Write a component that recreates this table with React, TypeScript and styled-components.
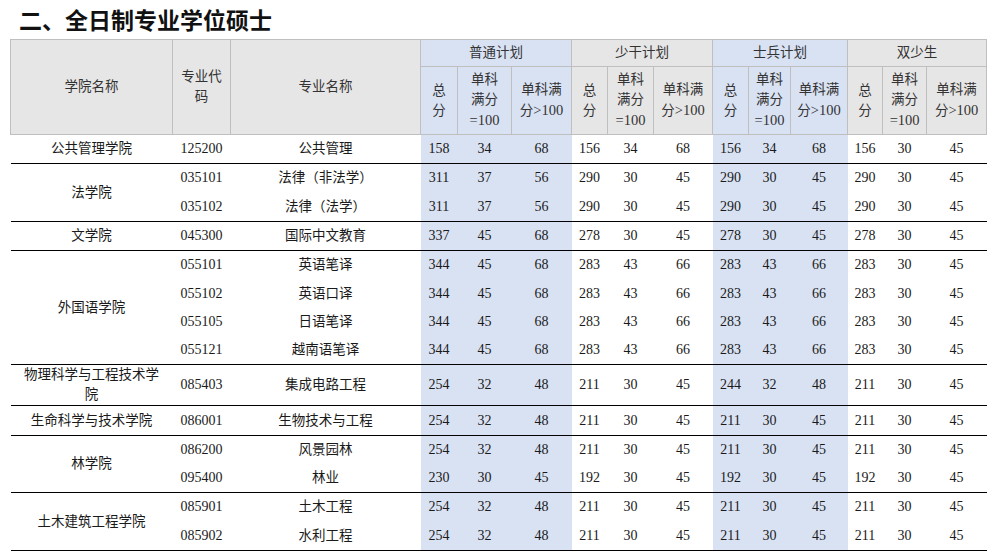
import { createGlobalStyle, styled } from "styled-components";

const GlobalStyle = createGlobalStyle`
    html, body {
        margin: 0;
        padding: 0;
        background: #ffffff;
    }
    body {
        font-family: "Liberation Serif", "Noto Sans CJK SC", serif;
        color: #1a1a1a;
    }
`;

const Page = styled.div`
    padding: 0 6px 0 10px;
`;

const Title = styled.h2`
    margin: 0 0 0 9px;
    height: 39px;
    line-height: 39px;
    font-family: "Noto Sans CJK SC", sans-serif;
    font-size: 23px;
    font-weight: 700;
    color: #111;
`;

const Table = styled.table`
    width: 976px;
    border-collapse: collapse;
    table-layout: fixed;
    font-size: 14px;
`;

const Th = styled.th<{ $blue?: boolean; $h?: number }>`
    background: ${(p) => (p.$blue ? "#d9e2f3" : "#e7e6e6")};
    border: 1px solid #bfbfbf;
    color: #333;
    font-weight: 400;
    font-size: 13.5px;
    line-height: 20px;
    padding: 0 2px;
    height: ${(p) => (p.$h ? `${p.$h}px` : "auto")};
    text-align: center;
    vertical-align: middle;
`;

const HeadNum = styled.span`
    font-size: 14.5px;
`;

const Row = styled.tr<{ $last?: boolean }>`
    border-bottom: ${(p) => (p.$last ? "1px solid #000" : "none")};
`;

const Td = styled.td<{ $blue?: boolean; $tall?: boolean }>`
    background: ${(p) => (p.$blue ? "#d9e2f3" : "transparent")};
    height: ${(p) => (p.$tall ? "40px" : "28.3px")};
    padding: 0;
    line-height: 20px;
    text-align: center;
    vertical-align: middle;
`;

const Text = styled.span`
    font-size: 13.5px;
`;

const widths = [162, 58, 190, 37, 54, 60, 36, 46, 59, 36, 42, 57, 35, 44, 60];

const plans = [
    { name: "普通计划", blue: true },
    { name: "少干计划", blue: false },
    { name: "士兵计划", blue: true },
    { name: "双少生", blue: false },
];

type Major = { code: string; name: string; vals: number[] };
type College = { name: React.ReactNode; tall?: boolean; majors: Major[] };

const colleges: College[] = [
    {
        name: "公共管理学院",
        majors: [{ code: "125200", name: "公共管理", vals: [158, 34, 68, 156, 34, 68, 156, 34, 68, 156, 30, 45] }],
    },
    {
        name: "法学院",
        majors: [
            { code: "035101", name: "法律（非法学）", vals: [311, 37, 56, 290, 30, 45, 290, 30, 45, 290, 30, 45] },
            { code: "035102", name: "法律（法学）", vals: [311, 37, 56, 290, 30, 45, 290, 30, 45, 290, 30, 45] },
        ],
    },
    {
        name: "文学院",
        majors: [{ code: "045300", name: "国际中文教育", vals: [337, 45, 68, 278, 30, 45, 278, 30, 45, 278, 30, 45] }],
    },
    {
        name: "外国语学院",
        majors: [
            { code: "055101", name: "英语笔译", vals: [344, 45, 68, 283, 43, 66, 283, 43, 66, 283, 30, 45] },
            { code: "055102", name: "英语口译", vals: [344, 45, 68, 283, 43, 66, 283, 43, 66, 283, 30, 45] },
            { code: "055105", name: "日语笔译", vals: [344, 45, 68, 283, 43, 66, 283, 43, 66, 283, 30, 45] },
            { code: "055121", name: "越南语笔译", vals: [344, 45, 68, 283, 43, 66, 283, 43, 66, 283, 30, 45] },
        ],
    },
    {
        name: (
            <>
                物理科学与工程技术学
                <br />院
            </>
        ),
        tall: true,
        majors: [{ code: "085403", name: "集成电路工程", vals: [254, 32, 48, 211, 30, 45, 244, 32, 48, 211, 30, 45] }],
    },
    {
        name: "生命科学与技术学院",
        majors: [{ code: "086001", name: "生物技术与工程", vals: [254, 32, 48, 211, 30, 45, 211, 30, 45, 211, 30, 45] }],
    },
    {
        name: "林学院",
        majors: [
            { code: "086200", name: "风景园林", vals: [254, 32, 48, 211, 30, 45, 211, 30, 45, 211, 30, 45] },
            { code: "095400", name: "林业", vals: [230, 30, 45, 192, 30, 45, 192, 30, 45, 192, 30, 45] },
        ],
    },
    {
        name: "土木建筑工程学院",
        majors: [
            { code: "085901", name: "土木工程", vals: [254, 32, 48, 211, 30, 45, 211, 30, 45, 211, 30, 45] },
            { code: "085902", name: "水利工程", vals: [254, 32, 48, 211, 30, 45, 211, 30, 45, 211, 30, 45] },
        ],
    },
];

export default function App() {
    return (
        <Page>
            <GlobalStyle />
            <Title>二、全日制专业学位硕士</Title>
            <Table>
                <colgroup>
                    {widths.map((w, i) => (
                        <col key={i} style={{ width: w }} />
                    ))}
                </colgroup>
                <thead>
                    <tr>
                        <Th rowSpan={2}>学院名称</Th>
                        <Th rowSpan={2}>
                            专业代
                            <br />码
                        </Th>
                        <Th rowSpan={2}>专业名称</Th>
                        {plans.map((p) => (
                            <Th key={p.name} colSpan={3} $blue={p.blue} $h={26}>
                                {p.name}
                            </Th>
                        ))}
                    </tr>
                    <tr>
                        {plans.map((p) => [
                            <Th key={p.name + "a"} $blue={p.blue} $h={67}>
                                总<br />分
                            </Th>,
                            <Th key={p.name + "b"} $blue={p.blue}>
                                单科
                                <br />
                                满分
                                <br />
                                <HeadNum>=100</HeadNum>
                            </Th>,
                            <Th key={p.name + "c"} $blue={p.blue}>
                                单科满
                                <br />
                                分<HeadNum>&gt;100</HeadNum>
                            </Th>,
                        ])}
                    </tr>
                </thead>
                <tbody>
                    {colleges.map((c, ci) =>
                        c.majors.map((m, mi) => (
                            <Row key={`${ci}-${mi}`} $last={mi === c.majors.length - 1}>
                                {mi === 0 && (
                                    <Td rowSpan={c.majors.length} $tall={c.tall}>
                                        <Text>{c.name}</Text>
                                    </Td>
                                )}
                                <Td $tall={c.tall}>{m.code}</Td>
                                <Td>
                                    <Text>{m.name}</Text>
                                </Td>
                                {m.vals.map((v, vi) => (
                                    <Td key={vi} $blue={plans[Math.floor(vi / 3)].blue} $tall={c.tall}>
                                        {v}
                                    </Td>
                                ))}
                            </Row>
                        ))
                    )}
                </tbody>
            </Table>
        </Page>
    );
}
